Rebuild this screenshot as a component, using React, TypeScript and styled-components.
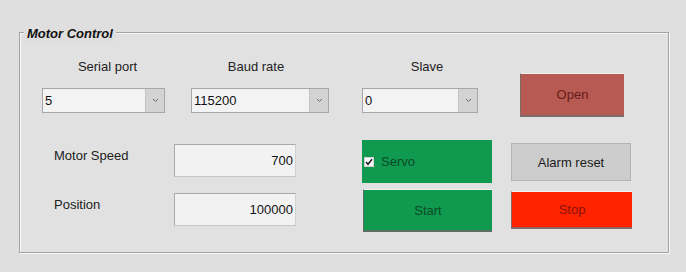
import React from 'react';
import styled, { createGlobalStyle } from 'styled-components';

const GlobalStyle = createGlobalStyle`
  html, body {
    margin: 0;
    padding: 0;
    background: #dfdfdf;
  }
  body {
    width: 686px;
    height: 272px;
    overflow: hidden;
    font-family: "Liberation Sans", Arial, sans-serif;
    font-size: 13px;
    color: #1e1e1e;
  }
`;

const Page = styled.div`
  padding: 32px 0 0 19px;
`;

const Frame = styled.div`
  position: relative;
  box-sizing: border-box;
  width: 650px;
  height: 221px;
  border: 1px solid #a3a3a3;
  box-shadow: inset 1px 1px 0 #f7f7f7, 1px 1px 0 #f7f7f7;
  background: #e1e1e1;
  padding: 26px 0 0 22px;
`;

const FrameTitle = styled.span`
  position: absolute;
  top: -7px;
  left: 4px;
  padding: 0 3px;
  background: #dfdfdf;
  font-weight: bold;
  font-style: italic;
  font-size: 13px;
  line-height: 16px;
  color: #111;
`;

const TopRow = styled.div`
  display: flex;
  align-items: flex-start;
  height: 58px;
`;

const ComboColumn = styled.div<{ $w: number; $ml: number }>`
  display: flex;
  flex-direction: column;
  width: ${p => p.$w}px;
  margin-left: ${p => p.$ml}px;
`;

const FieldLabel = styled.div<{ $shift: number }>`
  height: 16px;
  line-height: 16px;
  text-align: center;
  margin-bottom: 13px;
  transform: translateX(${p => p.$shift}px);
  color: #222;
`;

const Combo = styled.div`
  display: flex;
  box-sizing: border-box;
  height: 25px;
  border: 1px solid #a7a7a7;
  background: #f3f3f3;
`;

const ComboValue = styled.span`
  flex: 1;
  padding-left: 2px;
  line-height: 23px;
  color: #111;
`;

const ComboArrow = styled.span`
  display: flex;
  align-items: center;
  justify-content: center;
  width: 18px;
  background: #d3d3d3;
  border-left: 1px solid #c4c4c4;
`;

const Button = styled.button<{ $bg: string; $fg: string; $w: number; $h: number; $mt: number; $ml?: number; $edge: string }>`
  box-sizing: border-box;
  width: ${p => p.$w}px;
  height: ${p => p.$h}px;
  margin: ${p => p.$mt}px 0 0 ${p => p.$ml || 0}px;
  padding: 0;
  border: none;
  border-left: 1px solid ${p => p.$edge};
  border-bottom: 2px solid ${p => p.$edge};
  border-top: 1px solid #f2f2f2;
  background: ${p => p.$bg};
  color: ${p => p.$fg};
  font-family: "Liberation Sans", Arial, sans-serif;
  font-size: 13px;
`;

const GreyButton = styled.button<{ $w: number; $h: number; $mt: number }>`
  box-sizing: border-box;
  width: ${p => p.$w}px;
  height: ${p => p.$h}px;
  margin-top: ${p => p.$mt}px;
  padding: 0;
  border: 1px solid #b4b4b4;
  background: #cdcdcd;
  color: #1b1b1b;
  font-family: "Liberation Sans", Arial, sans-serif;
  font-size: 13px;
`;

const BottomRow = styled.div`
  display: flex;
  align-items: flex-start;
  margin-top: 23px;
  padding-left: 12px;
`;

const Fields = styled.div`
  display: flex;
  flex-direction: column;
  gap: 6px;
`;

const FieldRow = styled.div`
  display: flex;
  align-items: flex-start;
  height: 43px;
`;

const RowLabel = styled.div`
  width: 120px;
  margin-top: 8px;
  line-height: 16px;
  color: #222;
`;

const NumberBox = styled.div`
  box-sizing: border-box;
  width: 122px;
  height: 33px;
  margin-top: 4px;
  padding-right: 2px;
  border: 1px solid #a9a9a9;
  border-right-color: #d0d0d0;
  border-bottom-color: #c6c6c6;
  background: #f2f2f2;
  text-align: right;
  line-height: 31px;
  color: #111;
`;

const ActionGrid = styled.div`
  display: grid;
  grid-template-columns: 130px 121px;
  grid-template-rows: 43px 43px;
  column-gap: 19px;
  row-gap: 6px;
  margin-left: 66px;
`;

const ServoToggle = styled.label`
  display: flex;
  align-items: center;
  gap: 7px;
  padding-left: 2px;
  background: #0f9a50;
  color: #0b4a26;
  font-size: 13px;
`;

const CheckBox = styled.span`
  display: flex;
  align-items: center;
  justify-content: center;
  box-sizing: border-box;
  width: 10px;
  height: 10px;
  background: #fafafa;
  border: 1px solid #d0d0d0;
`;

const Chevron = () => (
  <svg width="7" height="5" viewBox="0 0 7 5">
    <polyline points="1,1 3.5,3.5 6,1" fill="none" stroke="#6a6a6a" strokeWidth="1" />
  </svg>
);

const Tick = () => (
  <svg width="8" height="8" viewBox="0 0 8 8">
    <polyline points="1,4 3,6.3 7,1.2" fill="none" stroke="#1a1a1a" strokeWidth="1.5" />
  </svg>
);

const combos = [
  { label: 'Serial port', value: '5', w: 123, ml: 0, shift: 4 },
  { label: 'Baud rate', value: '115200', w: 138, ml: 26, shift: -4 },
  { label: 'Slave', value: '0', w: 116, ml: 33, shift: 7 },
];

export default function App() {
  return (
    <>
      <GlobalStyle />
      <Page>
        <Frame>
          <FrameTitle>Motor Control</FrameTitle>

          <TopRow>
            {combos.map(c => (
              <ComboColumn key={c.label} $w={c.w} $ml={c.ml}>
                <FieldLabel $shift={c.shift}>{c.label}</FieldLabel>
                <Combo>
                  <ComboValue>{c.value}</ComboValue>
                  <ComboArrow><Chevron /></ComboArrow>
                </Combo>
              </ComboColumn>
            ))}
            <Button $bg="#b65a53" $fg="#6a1c18" $edge="#7a6c66" $w={104} $h={44} $mt={14} $ml={42}>
              Open
            </Button>
          </TopRow>

          <BottomRow>
            <Fields>
              <FieldRow>
                <RowLabel>Motor Speed</RowLabel>
                <NumberBox>700</NumberBox>
              </FieldRow>
              <FieldRow>
                <RowLabel>Position</RowLabel>
                <NumberBox>100000</NumberBox>
              </FieldRow>
            </Fields>

            <ActionGrid>
              <ServoToggle>
                <CheckBox><Tick /></CheckBox>
                Servo
              </ServoToggle>
              <GreyButton $w={120} $h={38} $mt={3}>Alarm reset</GreyButton>
              <Button $bg="#0f9a50" $fg="#0b4a26" $edge="#5f6f66" $w={129} $h={43} $mt={0} $ml={1}>
                Start
              </Button>
              <Button $bg="#ff2300" $fg="#8a1208" $edge="#8a6a66" $w={121} $h={38} $mt={2}>
                Stop
              </Button>
            </ActionGrid>
          </BottomRow>
        </Frame>
      </Page>
    </>
  );
}
